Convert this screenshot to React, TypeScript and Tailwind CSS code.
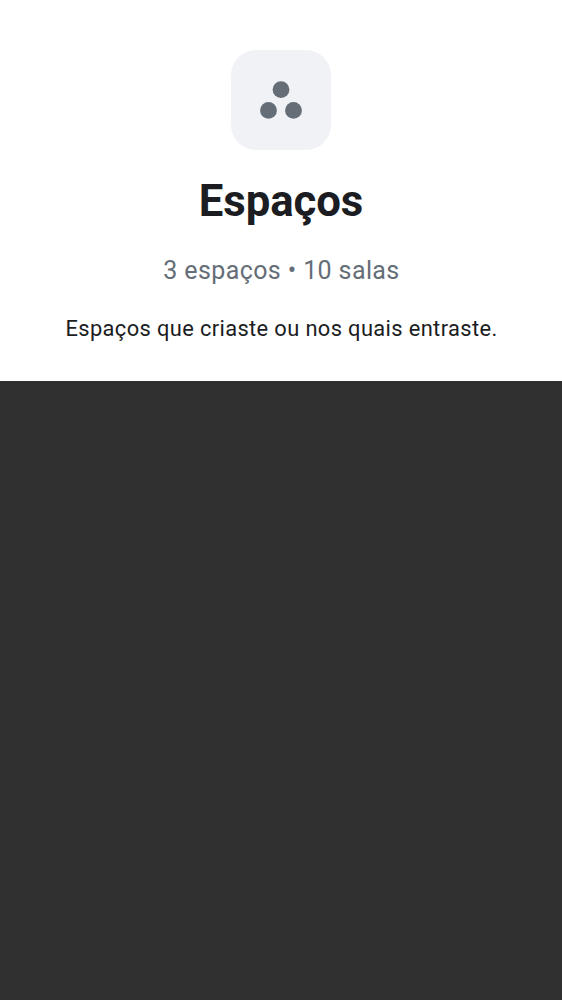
export default function App() {
  return (
    <main className="min-h-screen bg-[#303030] font-['Roboto',sans-serif]">
      <header className="flex h-[381px] flex-col items-center bg-white pt-[50px] text-[#1b1d22]">
        <div className="flex size-[100px] items-center justify-center rounded-[25px] bg-[#f0f2f5]">
          <svg className="size-[50px] fill-[#656d77]" viewBox="0 0 50 50" aria-hidden="true">
            <circle cx="25" cy="14.6" r="8.4" />
            <circle cx="12.5" cy="35.4" r="8.4" />
            <circle cx="37.5" cy="35.4" r="8.4" />
          </svg>
        </div>
        <h1 className="mt-[25px] text-[43.75px] leading-[52px] font-bold tracking-[-0.1px] whitespace-nowrap">Espaços</h1>
        <p className="mt-[27px] pl-px text-[25px] leading-[34px] tracking-[0.39px] whitespace-nowrap text-[#656d77]">3 espaços • 10 salas</p>
        <p className="mt-[26px] pl-px text-[21.875px] leading-[30px] tracking-[0.37px] whitespace-nowrap antialiased">Espaços que criaste ou nos quais entraste.</p>
      </header>
    </main>
  );
}
